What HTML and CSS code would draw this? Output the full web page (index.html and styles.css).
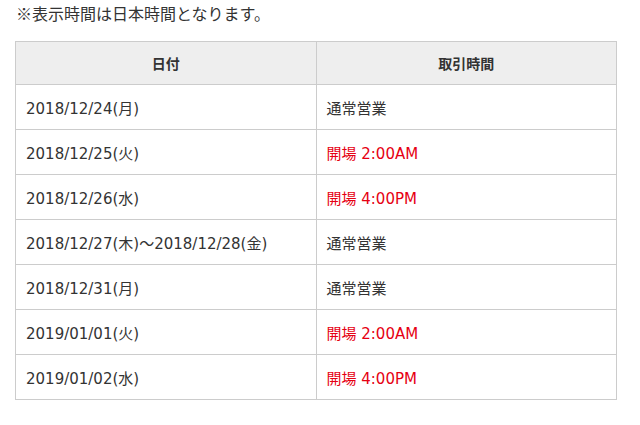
FILE: index.html
```html
<!DOCTYPE html>
<html lang="ja">
<head>
<meta charset="utf-8">
<link rel="stylesheet" href="styles.css">
</head>
<body>
<p class="note">※表示時間は日本時間となります。</p>
<table class="sched">
  <thead>
    <tr><th>日付</th><th>取引時間</th></tr>
  </thead>
  <tbody>
    <tr><td>2018/12/24(月)</td><td>通常営業</td></tr>
    <tr><td>2018/12/25(火)</td><td class="red">開場 2:00AM</td></tr>
    <tr><td>2018/12/26(水)</td><td class="red">開場 4:00PM</td></tr>
    <tr><td>2018/12/27(木)～2018/12/28(金)</td><td>通常営業</td></tr>
    <tr><td>2018/12/31(月)</td><td>通常営業</td></tr>
    <tr><td>2019/01/01(火)</td><td class="red">開場 2:00AM</td></tr>
    <tr><td>2019/01/02(水)</td><td class="red">開場 4:00PM</td></tr>
  </tbody>
</table>
</body>
</html>
```
FILE: styles.css
```css
html, body { margin: 0; padding: 0; background: #fff; }
body {
  font-family: "DejaVu Sans", "Noto Sans CJK JP", sans-serif;
  color: #333;
  padding: 0 24px 0 15px;
}
.note {
  margin: 0;
  padding-top: 1px;
  font-family: "Noto Sans CJK JP", sans-serif;
  font-size: 16px;
  line-height: 25px;
  height: 40px;
  padding-left: 1px;
}
.sched {
  width: 602px;
  border-collapse: collapse;
  table-layout: fixed;
}
.sched th, .sched td {
  border: 1px solid #ccc;
  text-align: left;
}
.sched th {
  background: #eee;
  font-family: "Noto Sans CJK JP", sans-serif;
  font-size: 14px;
  font-weight: bold;
  text-align: center;
  height: 42px;
  padding: 0;
}
.sched td {
  font-size: 15px;
  height: 44px;
  padding: 0 10px;
}
.red { color: #e60012; }
```
